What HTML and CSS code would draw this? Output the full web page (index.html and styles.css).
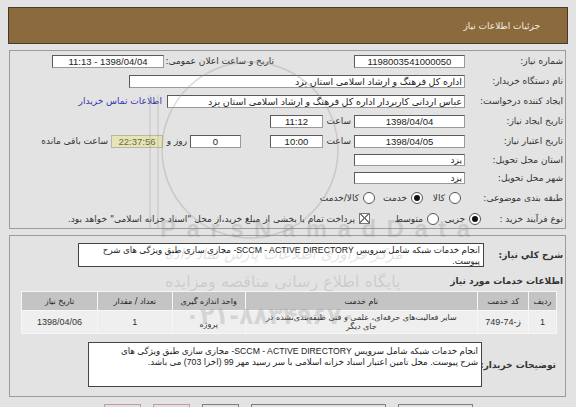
FILE: index.html
```html
<!DOCTYPE html>
<html lang="fa" dir="rtl">
<head>
<meta charset="utf-8">
<title>جزئیات اطلاعات نیاز</title>
<link rel="stylesheet" href="styles.css">
</head>
<body>
<div class="page">
  <div class="header"><span class="title">جزئیات اطلاعات نیاز</span></div>

  <div class="box box1">
    <div class="row h20">
      <div class="lbl">شماره نیاز:</div>
      <div class="inp c w111">1198003541000050</div>
      <div class="sub w113 mr77">تاریخ و ساعت اعلان عمومی:</div>
      <div class="inp c w112">1398/04/04 - 11:13</div>
    </div>
    <div class="row h20">
      <div class="lbl">نام دستگاه خریدار:</div>
      <div class="inp w336">اداره کل فرهنگ و ارشاد اسلامی استان یزد</div>
    </div>
    <div class="row h20">
      <div class="lbl">ایجاد کننده درخواست:</div>
      <div class="inp w298">عباس اردانی کاربردار اداره کل فرهنگ و ارشاد اسلامی استان یزد</div>
      <a class="link" href="#">اطلاعات تماس خریدار</a>
    </div>
    <div class="row h20">
      <div class="lbl">تاریخ ایجاد نیاز:</div>
      <div class="inp c w111">1398/04/04</div>
      <div class="sub w31">ساعت</div>
      <div class="inp c w53">11:12</div>
    </div>
    <div class="row h20">
      <div class="lbl">تاریخ اعتبار نیاز:</div>
      <div class="inp c w111">1398/04/05</div>
      <div class="sub w31">ساعت</div>
      <div class="inp c w53">10:00</div>
      <div class="inp c w51 mr29">0</div>
      <div class="sub w27">روز و</div>
      <div class="remain">22:37:56</div>
      <div class="sub w71">ساعت باقی مانده</div>
    </div>
    <div class="row h17">
      <div class="lbl">استان محل تحویل:</div>
      <div class="inp sm w111">یزد</div>
    </div>
    <div class="row h19">
      <div class="lbl">شهر محل تحویل:</div>
      <div class="inp sm w111">یزد</div>
    </div>
    <div class="row h22">
      <div class="lbl">طبقه بندی موضوعی:</div>
      <div class="opt o38 mr4"><span class="radio"></span><span>کالا</span></div>
      <div class="opt o48"><span class="radio on"></span><span>خدمت</span></div>
      <div class="opt"><span class="radio"></span><span>کالا/خدمت</span></div>
    </div>
    <div class="row h19">
      <div class="lbl l84">نوع فرآیند خرید :</div>
      <div class="opt o42"><span class="radio on"></span><span>جزیی</span></div>
      <div class="opt o69"><span class="radio"></span><span>متوسط</span></div>
      <div class="opt"><span class="check"></span><span>پرداخت تمام یا بخشی از مبلغ خرید،از محل "اسناد خزانه اسلامی" خواهد بود.</span></div>
    </div>
  </div>

  <div class="box box2">
    <div class="drow d1">
      <div class="blbl b81">شرح کلي نياز:</div>
      <div class="ta ta1">انجام خدمات شبکه شامل سرویس SCCM - ACTIVE DIRECTORY- مجازی سازی طبق ویژگی های شرح<br>پیوست.</div>
    </div>
    <div class="sect">اطلاعات خدمات مورد نياز</div>
    <table class="grid">
      <thead>
        <tr>
          <th class="c1">ردیف</th>
          <th class="c2">کد خدمت</th>
          <th class="c3">نام خدمت</th>
          <th class="c4">واحد اندازه گیری</th>
          <th class="c5">تعداد / مقدار</th>
          <th class="c6">تاریخ نیاز</th>
        </tr>
      </thead>
      <tbody>
        <tr>
          <td>1</td>
          <td>ز-74-749</td>
          <td class="name">سایر فعالیت‌های حرفه‌ای، علمی و فنی طبقه‌بندی‌نشده در<br>جای دیگر</td>
          <td class="low">پروژه</td>
          <td>1</td>
          <td>1398/04/06</td>
        </tr>
      </tbody>
    </table>
    <div class="drow d2">
      <div class="blbl b83">توضیحات خریدار:</div>
      <div class="ta ta2">انجام خدمات شبکه شامل سرویس SCCM - ACTIVE DIRECTORY- مجازی سازی طبق ویژگی های<br>شرح پیوست. محل تامین اعتبار اسناد خزانه اسلامی با سر رسید مهر 99 (اخزا 703) می باشد.</div>
    </div>
  </div>

  <div class="buttons">
    <span class="btn pink w37"></span>
    <span class="btn pink w37"></span>
    <span class="btn w37"></span>
    <span class="btn w135"></span>
    <span class="btn w75"></span>
  </div>
</div>

<div class="wm" aria-hidden="true">
  <svg class="wm-logo" width="576" height="407" viewBox="0 0 576 407">
    <circle cx="250" cy="150" r="88" fill="none" stroke="#9a9a9a" stroke-width="1.5"/>
    <path d="M150 95 V228 M158 95 V228" fill="none" stroke="#9a9a9a" stroke-width="1.2"/>
  </svg>
  <div class="wm-brand">ParsNamadData</div>
  <div class="wm-fa1">مرکز فرآوری اطلاعات پارس نماد داده</div>
  <div class="wm-fa2">پایگاه اطلاع رسانی مناقصه ومزایده</div>
  <div class="wm-tel">۰۲۱-۸۸۳۴۹۶۷۰</div>
</div>
</body>
</html>
```

FILE: styles.css
```css
* { box-sizing: border-box; }
html, body { margin: 0; padding: 0; }
body {
  position: relative;
  width: 576px;
  height: 407px;
  overflow: hidden;
  background: #e3e3e3;
  font-family: "Liberation Sans", "DejaVu Sans", sans-serif;
  font-size: 9px;
  color: #222;
}
.page { padding: 7px 8px 0 8px; }

.header {
  height: 37px;
  background: #8b6b3e;
  border: 1px solid #4a3b28;
  display: flex;
  align-items: center;
  padding-right: 27px;
}
.title { color: #f4eee2; font-family: "DejaVu Sans", sans-serif; font-size: 9px; }

.box {
  border: 1px solid #9c9c9c;
  margin: 6px 2px 0 1px;
  background: #e3e3e3;
}
.box1 { height: 179px; }
.box2 { height: 162px; padding-top: 7px; }

.row { display: flex; align-items: center; }
.h20 { height: 20px; }
.h17 { height: 17px; }
.h19 { height: 19px; }
.h22 { height: 22px; }

.lbl {
  width: 100px;
  flex: none;
  padding-right: 2px;
  font-family: "DejaVu Sans", sans-serif;
  font-size: 9px;
  color: #333;
  white-space: nowrap;
}
.l84 { width: 84px; }
.sub {
  flex: none;
  padding-right: 3px;
  font-family: "DejaVu Sans", sans-serif;
  font-size: 9px;
  color: #333;
  white-space: nowrap;
}
.w113 { width: 113px; }
.w31 { width: 31px; }
.w27 { width: 27px; }
.w71 { width: 71px; }
.mr77 { margin-right: 77px; }
.mr29 { margin-right: 29px; }
.mr4 { margin-right: 4px; }

.inp {
  flex: none;
  height: 13px;
  background: #fff;
  border: 1px solid #5a5a5a;
  border-right-color: #9a9a9a;
  border-bottom-color: #9a9a9a;
  padding: 0 2px;
  line-height: 11px;
  white-space: nowrap;
  overflow: hidden;
  font-family: "Liberation Sans", "DejaVu Sans", sans-serif;
  font-size: 9.5px;
  color: #222;
}
.inp.sm { height: 12px; line-height: 10px; font-size: 9px; }
.inp.c { text-align: center; }
.w111 { width: 111px; }
.w112 { width: 112px; }
.w336 { width: 336px; }
.w298 { width: 298px; }
.w53 { width: 53px; }
.w51 { width: 51px; }

.link {
  margin-right: 5px;
  color: #3636b0;
  text-decoration: none;
  font-family: "DejaVu Sans", sans-serif;
  font-size: 9px;
  white-space: nowrap;
}

.remain {
  flex: none;
  width: 52px;
  height: 13px;
  line-height: 11px;
  background: #e6e4b2;
  border: 1px solid #b8b8a0;
  color: #6a6a52;
  text-align: center;
  font-size: 9.5px;
}

.opt {
  flex: none;
  display: flex;
  align-items: center;
  gap: 4px;
  font-family: "DejaVu Sans", sans-serif;
  font-size: 9px;
  color: #333;
  white-space: nowrap;
}
.o38 { width: 38px; }
.o48 { width: 48px; }
.o42 { width: 42px; }
.o69 { width: 69px; }
.radio {
  flex: none;
  width: 12px;
  height: 12px;
  border-radius: 50%;
  border: 1px solid #555;
  background: #fff;
  position: relative;
}
.radio.on::after {
  content: "";
  position: absolute;
  left: 2px; top: 2px;
  width: 6px; height: 6px;
  border-radius: 50%;
  background: #111;
}
.check {
  flex: none;
  width: 11px;
  height: 11px;
  border: 1px solid #777;
  background:
    linear-gradient(45deg, transparent 46%, #777 46%, #777 56%, transparent 56%),
    linear-gradient(-45deg, transparent 46%, #777 46%, #777 56%, transparent 56%),
    #fff;
}

.drow { display: flex; align-items: center; }
.blbl {
  flex: none;
  font-family: "DejaVu Sans", sans-serif;
  font-weight: bold;
  font-size: 9px;
  color: #333;
  white-space: nowrap;
}
.b81 { width: 81px; padding-right: 2px; }
.b83 { width: 83px; padding-right: 9px; }
.ta {
  flex: none;
  background: #fff;
  border: 1px solid #444;
  padding: 1px 3px;
  font-family: "Liberation Sans", "DejaVu Sans", sans-serif;
  font-size: 8.7px;
  line-height: 11px;
  color: #222;
  white-space: nowrap;
  overflow: hidden;
}
.ta1 { width: 406px; height: 24px; }
.ta2 { width: 394px; height: 45px; padding-top: 3px; }

.sect {
  margin-top: 7px;
  padding-right: 2px;
  height: 15px;
  line-height: 15px;
  font-family: "DejaVu Sans", sans-serif;
  font-weight: bold;
  font-size: 9px;
  color: #333;
}

.grid {
  margin: 2px 8px 0 11px;
  width: 536px;
  border-collapse: collapse;
  font-family: "Liberation Sans", "DejaVu Sans", sans-serif;
  font-size: 9px;
  color: #333;
}
.grid th, .grid td {
  border: 1px solid #f6f6f6;
  text-align: center;
  padding: 0;
}
.grid th {
  height: 19px;
  background: #c4c4c4;
  font-weight: normal;
  font-family: "DejaVu Sans", sans-serif;
  font-size: 8px;
  color: #222;
}
.grid td { height: 23px; background: #efefef; }
.grid td.name { font-family: "DejaVu Sans", sans-serif; font-size: 8px; line-height: 9px; }
.grid td.low { font-family: "DejaVu Sans", sans-serif; font-size: 8px; padding-top: 5px; }
.c1 { width: 28px; }
.c2 { width: 51px; }
.c3 { width: 233px; }
.c4 { width: 73px; }
.c5 { width: 75px; }
.c6 { width: 76px; }

.d2 { margin-top: 8px; }

.buttons {
  display: flex;
  direction: ltr;
  gap: 12px;
  margin: 7px 0 0 96px;
}
.btn {
  display: block;
  height: 8px;
  background: #e0e0e0;
  border: 1px solid #808080;
}
.btn.pink { border-color: #c49a9a; }
.w37 { width: 37px; }
.w75 { width: 75px; }
.w135 { width: 135px; }

/* faint watermark overlay */
.wm { position: absolute; inset: 0; pointer-events: none; direction: ltr; }
.wm-logo { position: absolute; left: 0; top: 0; opacity: 0.35; }
.wm > div { position: absolute; color: rgba(120, 120, 120, 0.22); white-space: nowrap; }
.wm-brand {
  left: 160px; top: 215px;
  font-family: "Liberation Sans", sans-serif;
  font-weight: bold;
  font-size: 24px;
  letter-spacing: 10.5px;
}
.wm-fa1 {
  left: 165px; top: 245px;
  font-family: "DejaVu Sans", sans-serif;
  font-size: 15px;
  font-style: italic;
}
.wm-fa2 {
  left: 165px; top: 272px;
  font-family: "DejaVu Sans", sans-serif;
  font-size: 16px;
}
.wm-tel {
  left: 185px; top: 302px;
  font-family: "DejaVu Sans", sans-serif;
  font-weight: bold;
  font-size: 24px;
  letter-spacing: 4px;
}
```
